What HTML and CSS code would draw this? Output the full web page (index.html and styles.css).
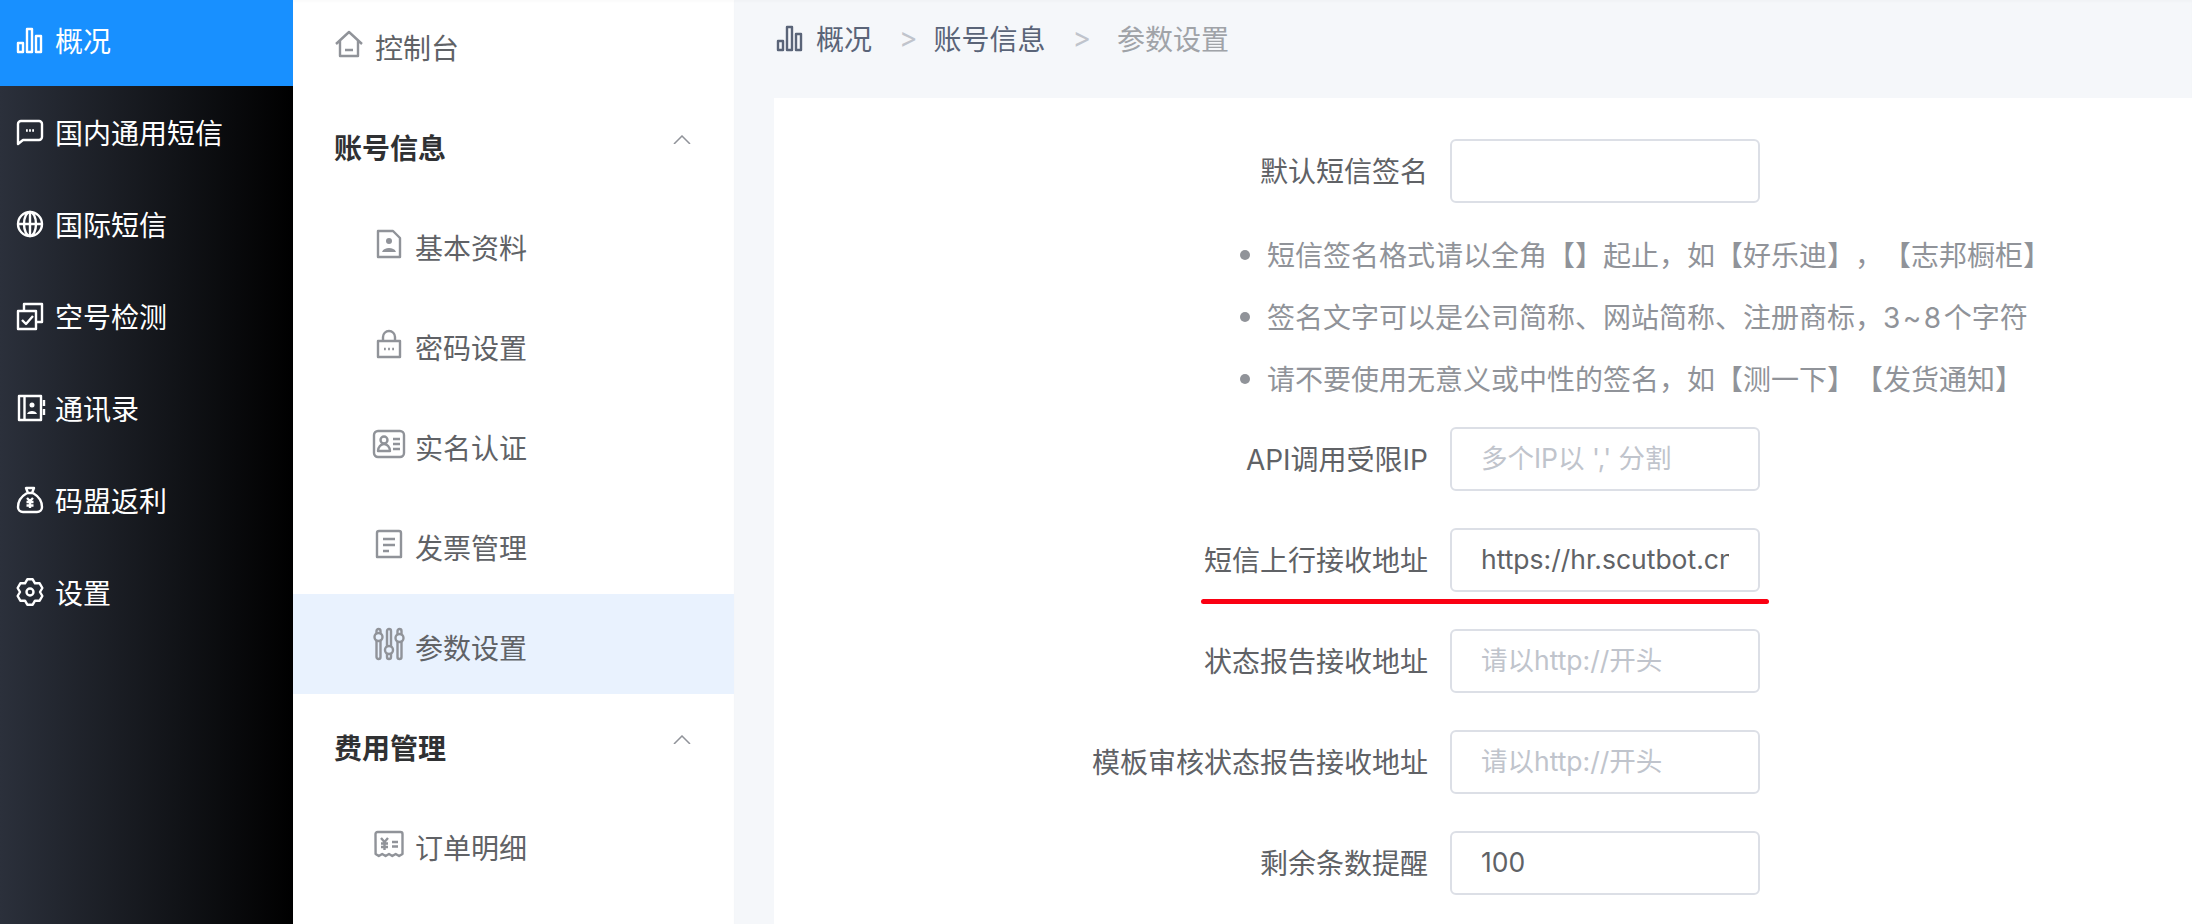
FILE: index.html
```html
<!DOCTYPE html>
<html lang="en">

<head>
    <meta charset="UTF-8">
    <title>参数设置</title>
    <link rel="stylesheet" href="styles.css">
</head>

<body>
    <nav class="sidebar">
        <ul class="side-list">
            <li class="side-item active">
                <svg class="icon" viewBox="0 0 28 28"><path d="M2 17h5v9H2zM11 3h5v23h-5zM20 10h5v16h-5z" /></svg>
                <span>概况</span>
            </li>
            <li class="side-item">
                <svg class="icon" viewBox="0 0 28 28"><path d="M2 26V6a3 3 0 0 1 3-3h18a3 3 0 0 1 3 3v13a3 3 0 0 1-3 3H7z" /><path d="M10 12.500h1.800M13.100 12.500h1.800M16.200 12.500h1.800" /></svg>
                <span>国内通用短信</span>
            </li>
            <li class="side-item">
                <svg class="icon" viewBox="0 0 28 28"><circle cx="14" cy="14" r="12" /><ellipse cx="14" cy="14" rx="6" ry="12" /><path d="M2 14h24M14 2v24" /></svg>
                <span>国际短信</span>
            </li>
            <li class="side-item">
                <svg class="icon" viewBox="0 0 28 28"><path d="M2 9h18v18H2z" /><path d="M8 9V2h18v18h-6" /><path d="M6 18l4 4 7-8" /></svg>
                <span>空号检测</span>
            </li>
            <li class="side-item">
                <svg class="icon" viewBox="0 0 28 28"><path d="M3 2h22v24H3zM8.500 2v24M28 6v6M28 15v6" /><circle class="solid" cx="16" cy="11" r="2.500" /><path class="solid" d="M11 20c1-4 9-4 10 0z" /></svg>
                <span>通讯录</span>
            </li>
            <li class="side-item">
                <svg class="icon" viewBox="0 0 28 28"><path d="M10 2h8l-2 5h-4zM11 7h6" /><path d="M11 7C6 10 2 15 2 21a5 5 0 0 0 5 5h14a5 5 0 0 0 5-5c0-6-4-11-9-14" /><path d="M11 12l3 3 3-3M14 15v7M10.500 16h7M10.500 19.500h7" /></svg>
                <span>码盟返利</span>
            </li>
            <li class="side-item">
                <svg class="icon" viewBox="0 0 28 28"><path d="M11.300 1.300h5.400L19 5.300h4.660l2.700 4.700L24 14l2.360 4-2.700 4.700H19l-2.300 4h-5.400l-2.300-4H4.340l-2.700-4.700L4 14l-2.360-4 2.700-4.700H9z" /><circle cx="14" cy="14" r="3.500" /></svg>
                <span>设置</span>
            </li>
        </ul>
    </nav>

    <aside class="menu">
        <a class="menu-row menu-home">
            <svg class="icon" viewBox="0 0 28 28"><path d="M1 14L14 2l13 12M5 11v15h18V11M10 20h8" /></svg>
            <span>控制台</span>
        </a>
        <div class="menu-row menu-group">
            <span>账号信息</span>
            <svg class="chevron" viewBox="0 0 18 9"><path d="M1 9l8-8 8 8" /></svg>
        </div>
        <a class="menu-row menu-sub">
            <svg class="icon" viewBox="0 0 28 28"><path d="M3 1h15l7 7v19H3z" /><circle cx="14" cy="11" r="3" class="solid" /><path class="solid" d="M7 22c1-3 4-4 7-4s6 1 7 4z" /></svg>
            <span>基本资料</span>
        </a>
        <a class="menu-row menu-sub">
            <svg class="icon" viewBox="0 0 28 28"><path d="M3 11h22v16H3zM8 11V7a6 6 0 0 1 12 0v4" /><path d="M9 19h1.800M13.100 19h1.800M17.200 19h1.800" /></svg>
            <span>密码设置</span>
        </a>
        <a class="menu-row menu-sub">
            <svg class="icon wide" viewBox="0 0 32 28"><rect x="1" y="1" width="30" height="26" rx="4" /><circle cx="11" cy="10" r="3.500" /><path d="M5 21c0-4 3-7 6-7s6 3 6 7zM20 9h7M20 14h7M20 19h7" /></svg>
            <span>实名认证</span>
        </a>
        <a class="menu-row menu-sub">
            <svg class="icon" viewBox="0 0 28 28"><path d="M2 27V3a2 2 0 0 1 2-2h20a2 2 0 0 1 2 2v24zM8 9h12M8 15h12M8 21h6" /></svg>
            <span>发票管理</span>
        </a>
        <a class="menu-row menu-sub current">
            <svg class="icon tall" viewBox="0 0 30 32"><rect x="2.500" y="1" width="4" height="30" rx="2" /><circle cx="4.500" cy="9" r="4" class="knob" /><rect x="13" y="1" width="4" height="30" rx="2" /><circle cx="15" cy="22" r="4" class="knob" /><rect x="23.500" y="1" width="4" height="30" rx="2" /><circle cx="25.500" cy="10" r="4" class="knob" /></svg>
            <span>参数设置</span>
        </a>
        <div class="menu-row menu-group">
            <span>费用管理</span>
            <svg class="chevron" viewBox="0 0 18 9"><path d="M1 9l8-8 8 8" /></svg>
        </div>
        <a class="menu-row menu-sub">
            <svg class="icon" viewBox="0 0 30 28"><path d="M1.500 4a2 2 0 0 1 2-2h23a2 2 0 0 1 2 2v20l-3.400 2-3.400-2-3.400 2-3.300-2-3.400 2-3.400-2-3.400 2-3.200-2z" /><path d="M7 8l3.500 4L14 8M10.500 12v8M7 13.500h7M7 17h7M18 12h6M18 16.500h6" /></svg>
            <span>订单明细</span>
        </a>
    </aside>

    <main class="main">
        <div class="crumbs">
            <svg class="icon crumb-icon" viewBox="0 0 28 28"><path d="M2 17h5v9H2zM11 3h5v23h-5zM20 10h5v16h-5z" /></svg>
            <span class="crumb">概况</span>
            <span class="crumb-sep">&gt;</span>
            <span class="crumb">账号信息</span>
            <span class="crumb-sep">&gt;</span>
            <span class="crumb crumb-last">参数设置</span>
        </div>

        <section class="card">
            <form class="form">
                <div class="field field-tips">
                    <label for="sign">默认短信签名</label>
                    <input id="sign" type="text">
                </div>
                <ul class="tips">
                    <li>短信签名格式请以全角【】起止，如【好乐迪】，【志邦橱柜】</li>
                    <li>签名文字可以是公司简称、网站简称、注册商标，<span class="range">3~8</span>个字符</li>
                    <li>请不要使用无意义或中性的签名，如【测一下】【发货通知】</li>
                </ul>
                <div class="field">
                    <label for="ip">API调用受限IP</label>
                    <input id="ip" type="text" placeholder="多个IP以 ',' 分割">
                </div>
                <div class="field">
                    <label for="up">短信上行接收地址</label>
                    <input id="up" type="text" value="https://hr.scutbot.cn/api/sms">
                    <div class="red-line"></div>
                </div>
                <div class="field">
                    <label for="report">状态报告接收地址</label>
                    <input id="report" type="text" placeholder="请以http://开头">
                </div>
                <div class="field">
                    <label for="tpl">模板审核状态报告接收地址</label>
                    <input id="tpl" type="text" placeholder="请以http://开头">
                </div>
                <div class="field">
                    <label for="left">剩余条数提醒</label>
                    <input id="left" type="text" value="100">
                </div>
            </form>
        </section>
    </main>
</body>

</html>
```

FILE: styles.css
```css
* {
    box-sizing: border-box;
}

body {
    font-family: 'Inter', 'Noto Sans CJK SC', sans-serif;
    font-size: 28px;
    text-spacing-trim: space-all;
    background: #f5f7fa;
    display: flex;
    height: 100vh;
    margin: 0;
    overflow: hidden;
}

.icon {
    width: 28px;
    height: 28px;
    flex: none;
    fill: none;
    stroke: currentColor;
    stroke-width: 2.4;
    stroke-linejoin: round;
    overflow: visible;
}

.icon .solid {
    fill: currentColor;
    stroke: none;
}

.sidebar {
    width: 293px;
    flex: none;
    background: linear-gradient(90deg, #2b303b, #000);
    color: #fff;
}

.side-list {
    list-style: none;
    margin: -6px 0 0;
    padding: 0;
}

.side-item {
    height: 92px;
    display: flex;
    align-items: center;
    gap: 11px;
    padding-left: 16px;
}

.side-item span {
    padding-bottom: 1px;
}

.side-item.active {
    background: #1890ff;
}

.menu {
    width: 441px;
    flex: none;
    background: #fff;
    color: #606266;
    overflow: hidden;
    box-shadow: inset 0 2px 2px rgba(0, 0, 0, 0.02);
}

.menu-row {
    height: 100px;
    display: flex;
    align-items: center;
}

.menu-row span {
    padding-top: 5px;
}

.menu-row:first-child {
    margin-top: -6px;
}

.menu-home {
    gap: 12px;
    padding-left: 42px;
}

.menu-home .icon {
    color: #909399;
}

.menu-group {
    justify-content: space-between;
    padding: 0 43px 0 41px;
    color: #303133;
    font-weight: 700;
}

.chevron {
    width: 18px;
    height: 9px;
    fill: none;
    stroke: #909399;
    stroke-width: 1.5;
    margin-bottom: 9px;
}

.menu-sub {
    gap: 11px;
    padding-left: 81px;
}

.menu-sub .icon {
    width: 30px;
    color: #909399;
}

.menu-sub .icon.wide {
    width: 32px;
    margin: 0 -1px;
}

.menu-sub .icon.tall {
    height: 32px;
}

.menu-sub .knob {
    fill: #e9f2fe;
}

.menu-sub.current {
    background: #e9f2fe;
}

.main {
    flex: 1;
    min-width: 0;
    display: flex;
    flex-direction: column;
    box-shadow: inset 0 2px 2px rgba(0, 0, 0, 0.02);
}

.crumbs {
    height: 98px;
    flex: none;
    display: flex;
    align-items: center;
    padding: 0 0 22px 42px;
    color: #5a6478;
}

.crumb-icon {
    margin-right: 12px;
}

.crumb-sep {
    margin: 0 16px 0 27px;
    color: #c0c4cc;
}

.crumb-last {
    margin-left: 10px;
    color: #a0a3a8;
}

.card {
    flex: 1;
    background: #fff;
    margin-left: 40px;
    padding-top: 41px;
}

.field {
    position: relative;
    display: flex;
    align-items: center;
    margin-bottom: 37px;
}

.field-tips {
    margin-bottom: 21px;
}

.field:last-child {
    margin-bottom: 0;
}

.field label {
    width: 654px;
    padding-bottom: 2px;
    text-align: right;
    color: #606266;
    margin-right: 22px;
}

.field input {
    width: 310px;
    height: 64px;
    padding: 0 29px 2px;
    border: 2px solid #dcdfe6;
    border-radius: 6px;
    font-family: inherit;
    font-size: 26.5px;
    color: #606266;
    outline: none;
}

.field input::placeholder {
    color: #c0c4cc;
}

.tips {
    list-style: none;
    margin: 0 0 17px;
    padding: 0 0 0 493px;
    color: #909399;
}

.tips li {
    position: relative;
    height: 62px;
    line-height: 64px;
    white-space: nowrap;
}

.tips li::before {
    content: "";
    position: absolute;
    left: -27px;
    top: 26px;
    width: 10px;
    height: 10px;
    border-radius: 50%;
    background: #909399;
}

.range {
    letter-spacing: 2.5px;
}

.red-line {
    position: absolute;
    left: 427px;
    top: 71px;
    width: 568px;
    height: 5px;
    border-radius: 3px;
    background: #fa0012;
}
```
